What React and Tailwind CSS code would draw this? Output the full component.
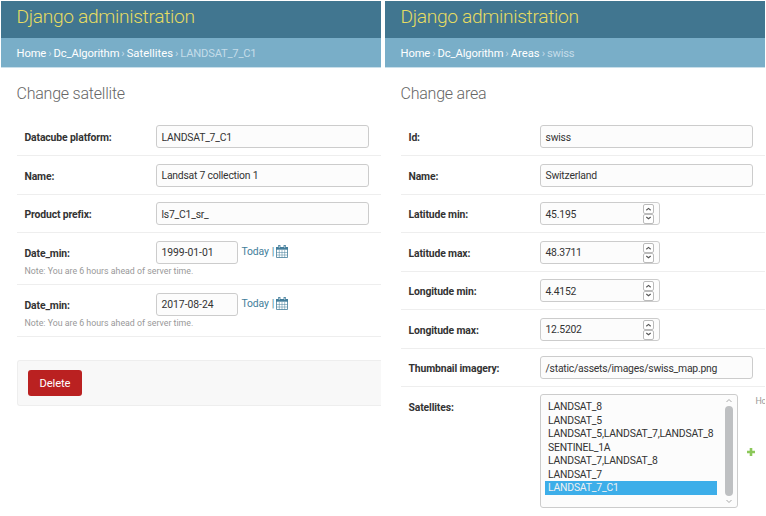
import React from 'react';

function Header({ section, current, title }) {
  return (
    <>
      <div className="h-[37px] bg-[#417690] pl-[15.500px]">
        <div className="whitespace-nowrap text-[19.2px] font-light leading-[31px] tracking-[-0.33px] text-[#e6dc62]">Django administration</div>
      </div>
      <div className="flex h-[30px] items-center gap-[2px] whitespace-nowrap border-b border-[#c9dfea] bg-[#79aec8] pl-[15.500px] pt-[3px] text-[11.2px] tracking-[-0.1px] text-[#c4dce8]">
        <span className="text-white">Home</span>
        <span>›</span>
        <span className="text-white">Dc_Algorithm</span>
        <span>›</span>
        <span className="tracking-[0.050px] text-white">{section}</span>
        <span>›</span>
        <span className="tracking-[-0.2px]">{current}</span>
      </div>
      <h1 className="mb-[15px] mt-4 h-[19px] whitespace-nowrap pl-[15.500px] text-[16px] font-light leading-[20px] tracking-[-0.22px] text-[#666]">{title}</h1>
    </>
  );
}

function Label({ children, raised = false }) {
  return <div className={`w-[131.500px] shrink-0 whitespace-nowrap text-[10.4px] font-bold leading-[12px] tracking-[-0.14px] text-[#333] ${raised ? 'pt-[14px]' : 'pt-[15px]'}`}>{children}</div>;
}

function Field({ label, value, tall = false, wide = true, spinner = false }) {
  return (
    <div className={`ml-4 flex border-b border-[#eee] pl-[7.500px] ${tall ? 'h-[39px]' : 'h-[38px]'}`}>
      <Label raised={!tall}>{label}</Label>
      <div className={`flex h-[23px] items-center justify-between rounded-[3px] border border-[#ccc] bg-[#fcfcfc] pl-[4.500px] pr-[5px] text-[10.4px] tracking-[-0.22px] text-[#333] ${tall ? 'mt-[8px]' : 'mt-[7px]'} ${wide ? 'w-[213px]' : 'w-[120px]'}`}>
        <span className={`whitespace-nowrap ${tall ? '' : 'pt-[2px]'}`}>{value}</span>
        {spinner && <Spinner />}
      </div>
    </div>
  );
}

function Spinner() {
  return (
    <svg width="11" height="20" viewBox="0 0 11 20" fill="none" stroke="#bbb">
      <rect x=".5" y=".5" width="10" height="9" rx="1.5" fill="#fff" />
      <rect x=".5" y="10.5" width="10" height="9" rx="1.5" fill="#fff" />
      <path d="M3.3 6.200l2.200-1.800 2.200 1.800M3.300 13l2.200 1.800 2.200-1.800" stroke="#555" strokeWidth="1.1" />
    </svg>
  );
}

function Calendar() {
  return (
    <svg width="12" height="13" viewBox="0 0 12 13" fill="none" stroke="#447e9b">
      <path d="M.5 4v8.500h11V4" strokeWidth=".8" />
      <path d="M.5 7.500h11M.5 10h11M3.300 5v7.500M6 5v7.500M8.700 5v7.500" strokeWidth=".5" />
      <path d="M0 2h12v2.700H0z" fill="#447e9b" stroke="none" />
      <path d="M3.300 0v3.500M8.700 0v3.500" strokeWidth="2.200" />
      <path d="M3.300 .8v2M8.700 .8v2" stroke="#d5e5ec" strokeWidth=".8" />
    </svg>
  );
}

function DateField({ value }) {
  return (
    <div className="ml-4 h-[52px] border-b border-[#eee] pl-[7.500px]">
      <div className="flex h-[31px]">
        <Label>Date_min:</Label>
        <div className="mt-2 flex h-[23px] w-[82px] items-center rounded-[3px] border border-[#ccc] bg-[#fcfcfc] pl-[4.500px] text-[10.4px] tracking-[-0.05px] text-[#333]">{value}</div>
        <div className="ml-[3.500px] mt-3 flex h-[13px] items-center whitespace-nowrap text-[10.4px] tracking-[-0.15px] text-[#447e9b]">
          <span>Today</span>
          <span className="ml-[3px] mr-[1.500px]">|</span>
          <Calendar />
        </div>
      </div>
      <div className="whitespace-nowrap pt-[1px] text-[8.8px] leading-[12px] text-[#999]">Note: You are 6 hours ahead of server time.</div>
    </div>
  );
}

const satellites = ['LANDSAT_8', 'LANDSAT_5', 'LANDSAT_5,LANDSAT_7,LANDSAT_8', 'SENTINEL_1A', 'LANDSAT_7,LANDSAT_8', 'LANDSAT_7', 'LANDSAT_7_C1'];

function SatelliteSelect() {
  return (
    <div className="ml-4 flex pl-[7.500px]">
      <Label>Satellites:</Label>
      <div className="mt-[7px] flex h-[114px] w-[198px] shrink-0 justify-between rounded-[3px] border border-[#ccc] bg-[#fcfcfc] pl-[4px] pr-[4px] text-[10.4px] tracking-[-0.2px] text-[#333]">
        <div className="w-[172px] pt-[5px]">
          {satellites.map((name) => (
            <div key={name} className={`h-[13.500px] whitespace-nowrap pl-[3px] leading-[13.500px] ${name === 'LANDSAT_7_C1' ? 'bg-[#3daee9] text-[#eff0f1]' : ''}`}>{name}</div>
          ))}
        </div>
        <div className="flex flex-col items-center">
          <svg width="8" height="11" viewBox="0 0 8 11" fill="none" stroke="#aaa"><path d="M1.500 7L4 4.500 6.500 7" /></svg>
          <div className="h-[90px] w-2 rounded-full bg-[#bec0c2]" />
          <svg width="8" height="11" viewBox="0 0 8 11" fill="none" stroke="#aaa"><path d="M1.500 4L4 6.500 6.500 4" /></svg>
        </div>
      </div>
      <svg className="ml-[8.500px] mt-[61px] shrink-0" width="8" height="8" viewBox="0 0 8 8"><path d="M2.700 0h2.600v2.700H8v2.600H5.300V8H2.700V5.300H0V2.700h2.700z" fill="#8cc85a" /></svg>
      <div className="mt-2 shrink-0 whitespace-nowrap pl-px text-[8.8px] leading-[12px] tracking-[-0.4px] text-[#999]">Ho</div>
    </div>
  );
}

export default function App() {
  return (
    <div className="flex h-[516px] w-[766px] gap-1 overflow-hidden bg-white pl-px pt-px" style={{ fontFamily: 'Roboto, "Liberation Sans", sans-serif' }}>
      <section className="w-[380px] shrink-0 overflow-hidden">
        <Header section="Satellites" current="LANDSAT_7_C1" title="Change satellite" />
        <Field label="Datacube platform:" value="LANDSAT_7_C1" />
        <Field label="Name:" value="Landsat 7 collection 1" tall />
        <Field label="Product prefix:" value="ls7_C1_sr_" />
        <DateField value="1999-01-01" />
        <DateField value="2017-08-24" />
        <div className="ml-4 mt-[23px] flex h-[46px] items-center rounded-l-[3px] border border-r-0 border-[#eee] bg-[#f8f8f8] pl-[10px]">
          <button className="h-[26px] w-[54px] rounded-[3px] bg-[#ba2121] pt-[2px] text-[11.2px] tracking-[-0.1px] text-white">Delete</button>
        </div>
      </section>
      <section className="w-[380px] shrink-0 overflow-hidden">
        <Header section="Areas" current="swiss" title="Change area" />
        <Field label="Id:" value="swiss" />
        <Field label="Name:" value="Switzerland" tall />
        <Field label="Latitude min:" value="45.195" wide={false} spinner />
        <Field label="Latitude max:" value="48.3711" tall wide={false} spinner />
        <Field label="Longitude min:" value="4.4152" wide={false} spinner />
        <Field label="Longitude max:" value="12.5202" tall wide={false} spinner />
        <Field label="Thumbnail imagery:" value="/static/assets/images/swiss_map.png" />
        <SatelliteSelect />
      </section>
    </div>
  );
}
